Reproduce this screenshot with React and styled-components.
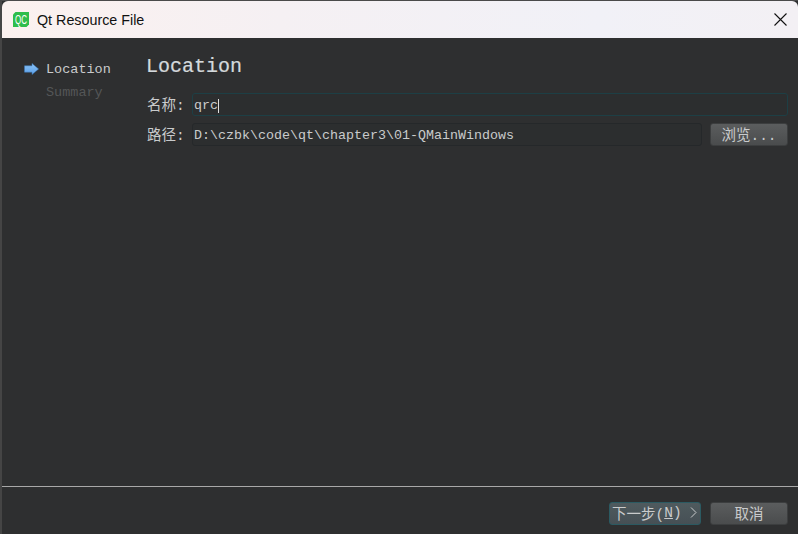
import React from "react";
import styled, { createGlobalStyle } from "styled-components";

const Global = createGlobalStyle`
  html, body { margin: 0; padding: 0; background: #2e2f30; }
  #root { width: 798px; height: 534px; overflow: hidden; }
`;

const MONO = `"Liberation Mono", "Noto Sans CJK SC", monospace`;

const Window = styled.div`
  width: 798px;
  height: 534px;
  box-sizing: border-box;
  display: flex;
  flex-direction: column;
  background: #2e2f30;
  border-top: 1px solid #4a4a4a;
  border-left: 2px solid #454545;
  font-family: ${MONO};
  overflow: hidden;
`;

const TitleBar = styled.div`
  height: 37px;
  flex: none;
  display: flex;
  align-items: center;
  padding-left: 11px;
  gap: 8px;
  background: linear-gradient(90deg, #fbf1ef 0%, #f5f0f3 35%, #f1f1f7 75%, #f3f0f4 100%);
  border-top-left-radius: 6px;
  border-top-right-radius: 6px;
`;

const TitleText = styled.span`
  flex: 1;
  font: 14.3px "Liberation Sans", Arial, sans-serif;
  color: #111;
`;

const CloseButton = styled.div`
  width: 36px;
  height: 37px;
  display: flex;
  align-items: center;
  justify-content: center;
`;

const Content = styled.div`
  flex: 1;
  display: flex;
  min-height: 0;
`;

const Sidebar = styled.nav`
  width: 144px;
  flex: none;
  box-sizing: border-box;
  padding: 23px 0 0 22px;
  display: flex;
  flex-direction: column;
  gap: 7px;
`;

const Step = styled.div`
  display: flex;
  align-items: center;
  height: 16px;
  gap: 7px;
  font-size: 13.5px;
  color: ${(p) => (p.$active ? "#c9cbcc" : "#545657")};
`;

const ArrowSlot = styled.span`
  width: 15px;
  height: 12px;
  display: flex;
  flex: none;
`;

const Main = styled.main`
  flex: 1;
  min-width: 0;
  box-sizing: border-box;
  padding: 16px 10px 0 0;
`;

const Heading = styled.h1`
  margin: 0 0 14px;
  font-family: "Liberation Mono", monospace;
  font-weight: 400;
  font-size: 20px;
  line-height: 25px;
  color: #d4d9dc;
  -webkit-text-stroke: 0.2px #d4d9dc;
`;

const Rows = styled.div`
  display: flex;
  flex-direction: column;
  gap: 7px;
`;

const Row = styled.div`
  display: flex;
  align-items: center;
  height: 23px;
`;

const Label = styled.label`
  width: 46px;
  flex: none;
  padding: 0 0 2px 1px;
  box-sizing: border-box;
  font-size: 14.5px;
  color: #c9cbcc;
  white-space: nowrap;
`;

const Field = styled.div`
  flex: 1;
  min-width: 0;
  height: 23px;
  box-sizing: border-box;
  border-radius: 3px;
  border: 1px solid ${(p) => (p.$focus ? "#1d3f45" : "#25282a")};
  background: #2c2e2f;
  padding: 2px 0 0 1px;
  display: flex;
  align-items: center;
  font-size: 13.33px;
  color: #c9cbcc;
  white-space: nowrap;
`;

const Caret = styled.span`
  width: 1px;
  height: 14px;
  background: #e0e0e0;
`;

const Btn = styled.button`
  height: 23px;
  box-sizing: border-box;
  flex: none;
  padding: 0 0 2px;
  border-radius: 3px;
  border: 1px solid ${(p) => (p.$focus ? "#2b5a62" : "#3c3e3f")};
  background: linear-gradient(180deg, #5b5d5e 0%, #4a4c4d 100%);
  color: #c9cbcc;
  font-family: ${MONO};
  font-size: 14.5px;
  display: flex;
  align-items: center;
  justify-content: center;
  white-space: nowrap;
`;

const BrowseBtn = styled(Btn)`
  width: 78px;
  margin-left: 8px;
`;

const Footer = styled.footer`
  flex: none;
  height: 48px;
  box-sizing: border-box;
  border-top: 1px solid #a8a8a8;
  display: flex;
  align-items: flex-start;
  justify-content: flex-end;
  gap: 9px;
  padding: 15px 10px 0 0;
`;

const NextBtn = styled(Btn)`
  width: 92px;
  justify-content: flex-start;
  padding-left: 2px;
  background: linear-gradient(180deg, #4f5a5e 0%, #465055 100%);
`;

const Chevron = styled.span`
  display: flex;
  margin-left: auto;
  margin-right: 3px;
`;

const Under = styled.span`
  text-decoration: underline;
`;

const CancelBtn = styled(Btn)`
  width: 78px;
`;

const QtLogo = () => (
  <svg width="16" height="15" viewBox="0 0 16 15">
    <path d="M2.5 0H16V12.5L13.5 15H0V2.5Z" fill="#2ebd4b" />
    <g transform="translate(2 12) scale(0.8 1.2)">
      <text fontFamily="Liberation Sans" fontSize="10" fill="#fff">QC</text>
    </g>
  </svg>
);

const CloseIcon = () => (
  <svg width="13" height="13" viewBox="0 0 13 13">
    <path d="M0.5 0.5L12.5 12.5M12.5 0.5L0.5 12.5" stroke="#111" strokeWidth="1.1" fill="none" />
  </svg>
);

const StepArrow = () => (
  <svg width="15" height="12" viewBox="0 0 15 12">
    <defs>
      <linearGradient id="stepArrowFill" x1="0" y1="0" x2="0" y2="1">
        <stop offset="0" stopColor="#8cc4f7" />
        <stop offset="1" stopColor="#5b9fe6" />
      </linearGradient>
    </defs>
    <path d="M0.5 2.8H8V0.4L14.6 6L8 11.6V9.2H0.5Z" fill="url(#stepArrowFill)" stroke="#3a78b8" strokeWidth="0.5" />
  </svg>
);

const NextChevron = () => (
  <svg width="7" height="11" viewBox="0 0 7 11">
    <path d="M1 0.5L6 5.5L1 10.5" stroke="#c9cbcc" strokeWidth="1" fill="none" />
  </svg>
);

export default function App() {
  return (
    <>
      <Global />
      <Window>
        <TitleBar>
          <QtLogo />
          <TitleText>Qt Resource File</TitleText>
          <CloseButton><CloseIcon /></CloseButton>
        </TitleBar>
        <Content>
          <Sidebar>
            <Step $active>
              <ArrowSlot><StepArrow /></ArrowSlot>
              Location
            </Step>
            <Step>
              <ArrowSlot />
              Summary
            </Step>
          </Sidebar>
          <Main>
            <Heading>Location</Heading>
            <Rows>
              <Row>
                <Label>名称:</Label>
                <Field $focus>qrc<Caret /></Field>
              </Row>
              <Row>
                <Label>路径:</Label>
                <Field>D:\czbk\code\qt\chapter3\01-QMainWindows</Field>
                <BrowseBtn>浏览...</BrowseBtn>
              </Row>
            </Rows>
          </Main>
        </Content>
        <Footer>
          <NextBtn $focus>
            下一步(<Under>N</Under>)
            <Chevron><NextChevron /></Chevron>
          </NextBtn>
          <CancelBtn>取消</CancelBtn>
        </Footer>
      </Window>
    </>
  );
}
